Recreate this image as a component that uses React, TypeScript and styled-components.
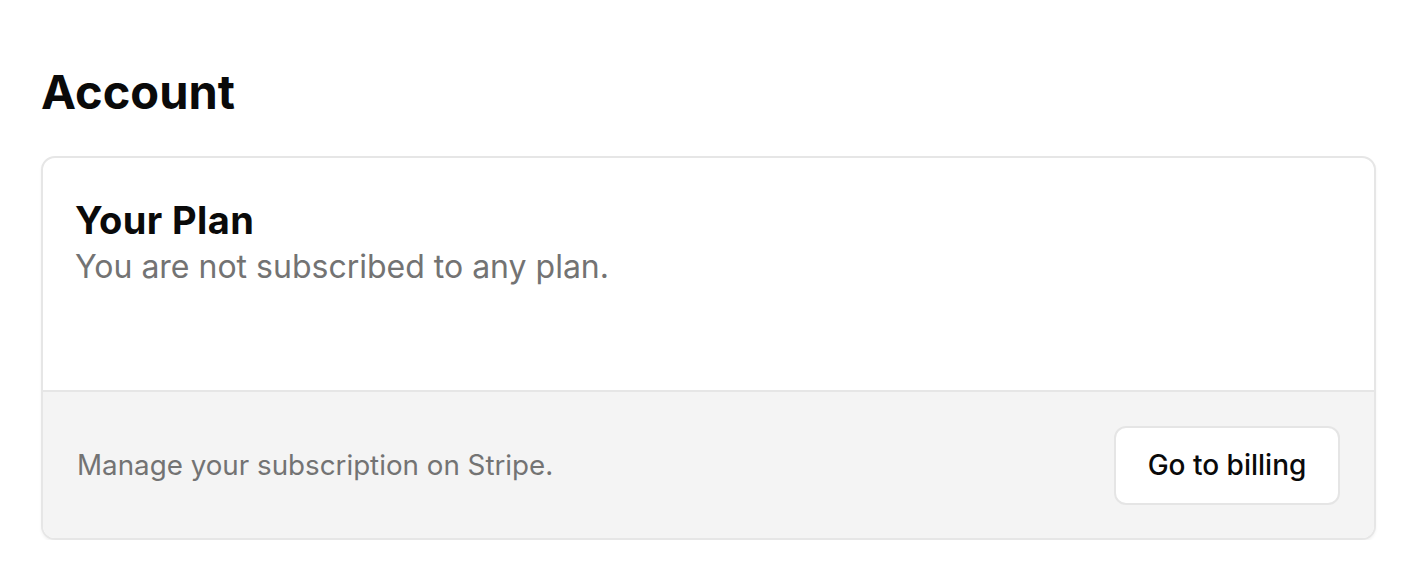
import React from 'react';
import styled, { createGlobalStyle } from 'styled-components';

const GlobalStyle = createGlobalStyle`
  * { box-sizing: border-box; }
  body {
    margin: 0;
    background: #ffffff;
    font-family: Inter, "Noto Sans", sans-serif;
    color: #0a0a0a;
  }
`;

const Page = styled.div`
  padding: 64px 34px 0 41px;
`;

const Title = styled.h1`
  margin: 0 0 36px 0;
  font-size: 47px;
  line-height: 56px;
  font-weight: 700;
`;

const Card = styled.div`
  border: 2px solid #e6e6e6;
  border-radius: 14px;
  overflow: hidden;
  background: #ffffff;
  box-shadow: 0 2px 3px rgba(0, 0, 0, 0.05);
`;

const CardBody = styled.div`
  padding: 39px 32px 0 32px;
  height: 232px;
`;

const CardTitle = styled.h2`
  margin: 0;
  font-size: 38px;
  line-height: 46px;
  font-weight: 700;
  letter-spacing: 0.4px;
`;

const CardText = styled.p`
  margin: 4px 0 0 0;
  font-size: 32px;
  line-height: 40px;
  color: #737373;
`;

const Footer = styled.div`
  display: flex;
  align-items: center;
  justify-content: space-between;
  height: 148px;
  padding: 0 34px;
  background: #f4f4f4;
  border-top: 2px solid #e6e6e6;
`;

const FooterText = styled.span`
  font-size: 27.75px;
  color: #737373;
`;

const Button = styled.button`
  width: 226px;
  height: 79px;
  border: 2px solid #e5e5e5;
  border-radius: 12px;
  background: #ffffff;
  font-family: Inter, "Noto Sans", sans-serif;
  font-size: 28px;
  font-weight: 500;
  color: #0a0a0a;
  cursor: pointer;
`;

const App: React.FC = () => {
  return (
    <>
      <GlobalStyle />
      <Page>
        <Title>Account</Title>
        <Card>
          <CardBody>
            <CardTitle>Your Plan</CardTitle>
            <CardText>You are not subscribed to any plan.</CardText>
          </CardBody>
          <Footer>
            <FooterText>Manage your subscription on Stripe.</FooterText>
            <Button>Go to billing</Button>
          </Footer>
        </Card>
      </Page>
    </>
  );
};

export default App;
